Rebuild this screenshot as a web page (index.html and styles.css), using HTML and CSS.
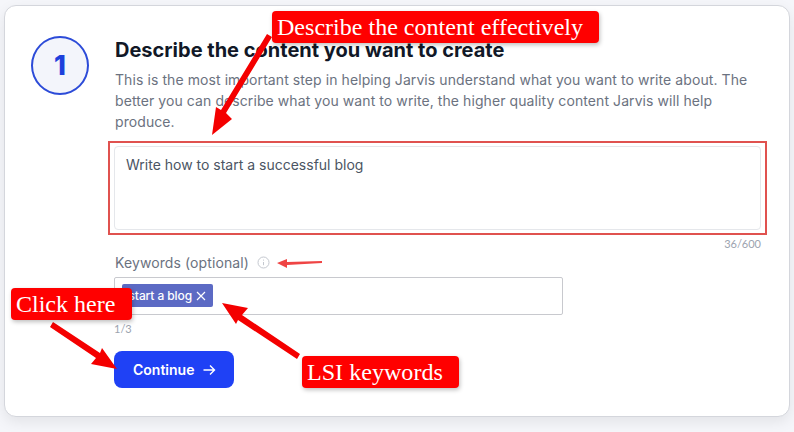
FILE: index.html
```html
<!DOCTYPE html>
<html lang="en">
<head>
<meta charset="utf-8">
<title>Describe the content</title>
<link rel="stylesheet" href="styles.css">
</head>
<body>
<main class="card">
  <div class="step">1</div>
  <section class="content">
    <h1 class="title">Describe the content you want to create</h1>
    <p class="lead">This is the most important step in helping Jarvis understand what you want to write about. The better you can describe what you want to write, the higher quality content Jarvis will help produce.</p>
    <div class="highlight">
      <div class="textarea">Write how to start a successful blog</div>
    </div>
    <div class="counter">36/600</div>
    <div class="label-row">
      <span class="label">Keywords (optional)</span>
      <svg class="info" width="13" height="13" viewBox="0 0 13 13" fill="none" stroke="#c4c8cf" stroke-width="1"><circle cx="6.5" cy="6.5" r="5.5"/><path d="M6.5 6v3.2M6.5 3.6v1"/></svg>
    </div>
    <div class="tags">
      <span class="tag">start a blog
        <svg width="10" height="10" viewBox="0 0 10 10" fill="none" stroke="#fff" stroke-width="1.2"><path d="M1 1l8 8M9 1l-8 8"/></svg>
      </span>
    </div>
    <div class="tag-count">1/3</div>
    <button class="continue" type="button">Continue
      <svg width="14" height="12" viewBox="0 0 14 12" fill="none" stroke="#fff" stroke-width="1.4"><path d="M1.5 6h11M8 1.5L12.5 6 8 10.5"/></svg>
    </button>
  </section>
</main>

<svg class="arrows" width="794" height="432" viewBox="0 0 794 432">
  <g fill="#f40000" stroke="none">
    <path d="M267 34L272 37L226 113L232 119L212 135L216 107L221 110Z"/>
    <path d="M50 327L53 322L100 353L102 348L117 369L91 364L96 358Z"/>
    <path d="M222 303L248 308L242 315L300 354L297 359L238 320L236 324Z"/>
    <path d="M277 263L287 259L287 262L322 261L322 263L287 265L287 268Z" fill="#ef4444"/>
  </g>
</svg>

<div class="note note-describe">Describe the content effectively</div>
<div class="note note-click">Click here</div>
<div class="note note-lsi">LSI keywords</div>
</body>
</html>
```
FILE: styles.css
```css
* { box-sizing: border-box; }
html, body { margin: 0; height: 432px; overflow: hidden; }
body {
  background: #f5f6fa;
  padding: 5px 4px 0 4px;
  font-family: Inter, "Liberation Sans", sans-serif;
  position: relative;
}
.card {
  width: 786px;
  height: 412px;
  background: #fff;
  border: 1px solid #d4d6dc;
  border-radius: 12px;
  box-shadow: 0 5px 14px rgba(0, 0, 0, .08);
  display: flex;
  padding: 30px 0 0 26px;
}
.step {
  width: 58px;
  height: 59px;
  border: 2px solid #2c4bd8;
  border-radius: 50%;
  background: #f3f5fb;
  color: #1d40dc;
  font-size: 27px;
  font-weight: 800;
  display: flex;
  align-items: center;
  justify-content: center;
  flex: none;
}
.content { margin-left: 25px; width: 647px; }
.title {
  margin: 1px 0 0 1px;
  font-size: 20px;
  line-height: 26px;
  font-weight: 700;
  color: #111827;
}
.lead {
  margin: 6px 0 0 1px;
  font-size: 14px;
  line-height: 21px;
  letter-spacing: .08px;
  color: #6b7280;
  width: 640px;
}
.highlight {
  margin: 9px 0 0 -6px;
  width: 659px;
  height: 94px;
  border: 2px solid #e0524f;
  padding: 3px 4px;
}
.textarea {
  height: 84px;
  border: 1px solid #e5e7eb;
  border-radius: 4px;
  padding: 8px 11px;
  font-size: 14px;
  line-height: 20px;
  color: #4b5563;
}
.counter {
  text-align: right;
  font-family: Lato, sans-serif;
  font-size: 11px;
  line-height: 14px;
  color: #9ca3af;
  margin-top: 2px;
}
.label-row {
  display: flex;
  align-items: center;
  gap: 8px;
  margin: 1px 0 0 1px;
  height: 20px;
}
.label { font-size: 14px; letter-spacing: .1px; color: #6b7280; }
.tags {
  margin-top: 5px;
  width: 449px;
  height: 38px;
  border: 1px solid #c8c9ce;
  border-radius: 2px;
  padding: 6px 7px;
  display: flex;
  align-items: flex-start;
}
.tag {
  height: 23px;
  width: 91px;
  background: #5c6ac4;
  border-radius: 2px;
  color: #fff;
  font-size: 12px;
  font-weight: 500;
  letter-spacing: -.1px;
  display: flex;
  align-items: center;
  justify-content: flex-end;
  gap: 4px;
  padding-right: 7px;
}
.tag-count {
  font-family: Lato, sans-serif;
  font-size: 11px;
  line-height: 14px;
  color: #9ca3af;
  margin-top: 7px;
}
.continue {
  display: flex;
  align-items: center;
  gap: 8px;
  margin-top: 15px;
  width: 120px;
  height: 37px;
  background: #1f41f5;
  color: #fff;
  border: 0;
  border-radius: 8px;
  font-family: inherit;
  font-size: 14px;
  font-weight: 600;
  padding: 0 0 0 19px;
}
.arrows { position: absolute; left: 0; top: 0; pointer-events: none; }
.note {
  position: absolute;
  height: 32px;
  background: #ff0000;
  color: #fff;
  border-radius: 4px;
  box-shadow: 1px 2px 4px rgba(0, 0, 0, .25);
  font-family: "Liberation Serif", serif;
  font-size: 24px;
  line-height: 32px;
  padding-left: 5px;
  white-space: nowrap;
}
.note-describe { left: 272px; top: 11px; width: 327px; font-size: 24.05px; }
.note-click { left: 11px; top: 288px; width: 121px; }
.note-lsi { left: 302px; top: 356px; width: 157px; font-size: 24.1px; }
```
